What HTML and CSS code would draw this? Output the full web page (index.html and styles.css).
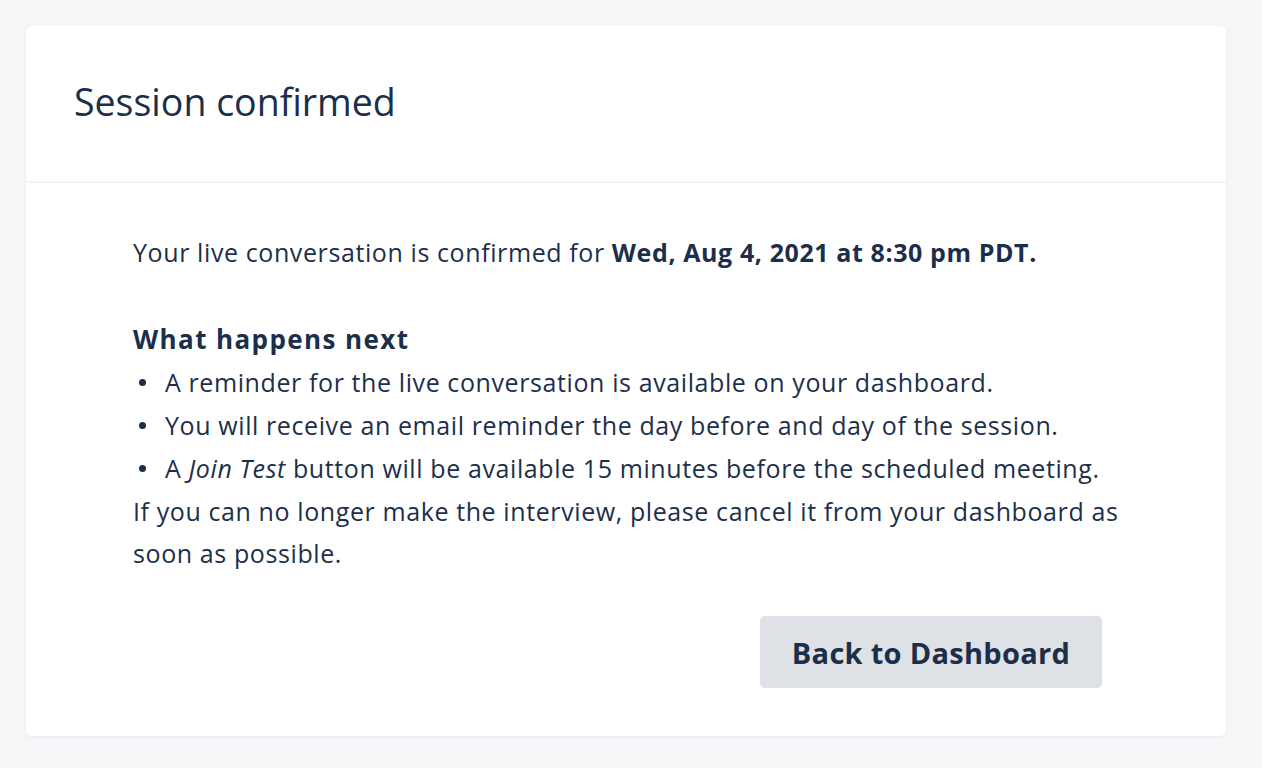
FILE: index.html
```html
<!DOCTYPE html>
<html lang="en">
<head>
<meta charset="utf-8">
<title>Session confirmed</title>
<link rel="stylesheet" href="styles.css">
</head>
<body>
<main class="page">
  <section class="card">
    <header class="card-header">
      <h1 class="title">Session confirmed</h1>
    </header>
    <div class="card-body">
      <p class="lead">Your live conversation is confirmed for <strong>Wed, Aug 4, 2021 at 8:30 pm PDT.</strong></p>
      <h2 class="subtitle">What happens next</h2>
      <ul class="steps">
        <li>A reminder for the live conversation is available on your dashboard.</li>
        <li>You will receive an email reminder the day before and day of the session.</li>
        <li>A <em>Join Test</em> button will be available 15 minutes before the scheduled meeting.</li>
      </ul>
      <p class="note">If you can no longer make the interview, please cancel it from your dashboard as soon as possible.</p>
      <div class="actions">
        <button class="btn" type="button">Back to Dashboard</button>
      </div>
    </div>
  </section>
</main>
</body>
</html>
```

FILE: styles.css
```css
* { box-sizing: border-box; }
html, body { margin: 0; padding: 0; }
body {
  background: #f5f6f8;
  font-family: "Open Sans", "Liberation Sans", sans-serif;
  color: #1c2f4a;
}
.page {
  padding: 26px 36px 32px 26px;
}
.card {
  background: #ffffff;
  border-radius: 6px;
  box-shadow: 0 1px 3px rgba(30, 40, 60, 0.06);
  height: 710px;
  display: flex;
  flex-direction: column;
}
.card-header {
  height: 157px;
  padding: 0 48px 4px;
  display: flex;
  align-items: center;
  border-bottom: 2px solid #f2f3f5;
}
.title {
  margin: 0;
  font-size: 37.5px;
  font-weight: 400;
  letter-spacing: 0;
}
.card-body {
  padding: 48px 96px 0 107px;
  font-size: 25px;
  line-height: 42px;
  letter-spacing: 0.6px;
}
.lead { margin: 0; }
.lead strong { font-weight: 700; }
.subtitle {
  margin: 45px 0 0 0;
  font-size: 26px;
  font-weight: 700;
  line-height: 42px;
  letter-spacing: 1.4px;
}
.steps {
  list-style: none;
  margin: 1px 0 0 0;
  padding: 0;
}
.steps li {
  position: relative;
  padding-left: 32px;
  line-height: 43px;
}
.steps li::before {
  content: "";
  position: absolute;
  left: 6px;
  top: 18px;
  width: 7px;
  height: 7px;
  border-radius: 50%;
  background: #1c2f4a;
}
.note { margin: 0; line-height: 42px; }
.actions {
  display: flex;
  justify-content: flex-end;
  margin-top: 42px;
  padding-right: 28px;
}
.btn {
  font-family: inherit;
  background: #dee1e6;
  color: #1c2f4a;
  border: 0;
  border-radius: 5px;
  width: 342px;
  height: 72px;
  font-size: 29px;
  font-weight: 700;
  letter-spacing: 0.3px;
  cursor: pointer;
}
```
